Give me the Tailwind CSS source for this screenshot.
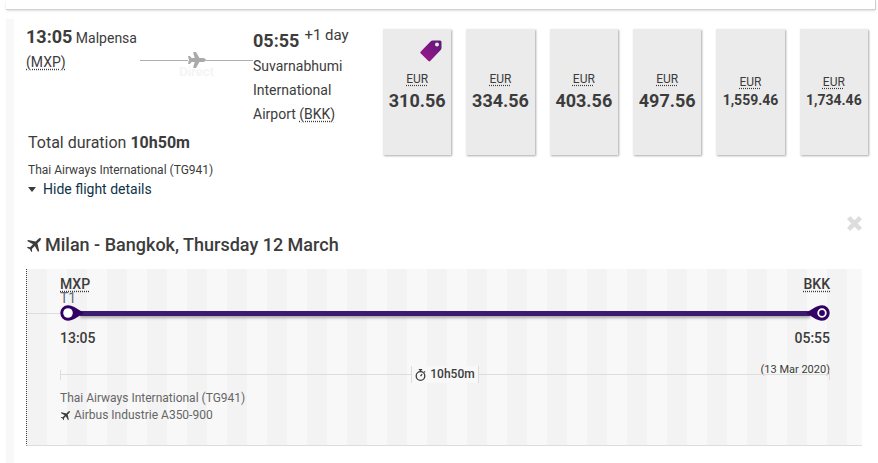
<!DOCTYPE html>
<html lang="en">
<head>
    <meta charset="UTF-8">
    <meta name="viewport" content="width=device-width, initial-scale=1.0">
    <title>Milan - Bangkok flights</title>
    <script src="https://cdn.jsdelivr.net/npm/@tailwindcss/browser@4"></script>
</head>
<body class="bg-white font-['Roboto',sans-serif] text-sm text-[#3c3c3c]">
    <!-- Shared icons -->
    <svg class="hidden">
        <symbol id="plane" viewBox="0 0 576 512">
            <path d="M480 192H365.71L260.61 8.06A16.014 16.014 0 0 0 246.71 0h-65.5c-10.63 0-18.3 10.17-15.38 20.39L214.86 192H112l-43.2-57.6c-3.02-4.03-7.77-6.4-12.8-6.4H16.01C5.6 128-2.04 137.78.49 147.88L32 256 .49 364.12C-2.04 374.22 5.6 384 16.01 384H56c5.04 0 9.78-2.37 12.8-6.4L112 320h102.86l-49.03 171.6c-2.92 10.22 4.75 20.4 15.38 20.4h65.5c5.74 0 11.04-3.08 13.89-8.06L365.71 320H480c35.35 0 96-28.65 96-64s-60.65-64-96-64z"/>
        </symbol>
        <symbol id="plane-up" viewBox="0 0 16 16">
            <path d="M15.7.3c.5.6.1 1.800-.9 2.800L12.200 5.700l1.800 8-1.100 1.100-3.500-6.300-3.200 3.200.4 2.300-.9.900-1.600-3L1.100 10.300l.9-.9 2.300.4 3.200-3.200L1.200 3.100 2.300 2l8 1.800L12.900 1.200C13.900.2 15.100-.2 15.700.3z"/>
        </symbol>
    </svg>

    <div class="mr-[2px] ml-[6px] h-[10px] border-r border-b border-[#d0d0d0] shadow-sm"></div>

    <main class="mt-[9px] ml-[6px] border-l-8 border-[#f8f8f8] pr-[10px] pb-[18px] pl-3">
        <!-- Flight summary and fares -->
        <section class="flex pt-[10px]">
            <div class="w-[357px] shrink-0">
                <div class="flex leading-6">
                    <div class="-mt-1 w-[114px] shrink-0">
                        <strong class="text-lg leading-6">13:05</strong>
                        Malpensa <abbr class="underline decoration-dotted underline-offset-2" title="Milan Malpensa">(MXP)</abbr>
                    </div>
                    <div class="flex w-[113px] shrink-0 flex-col items-center pt-[23px]">
                        <div class="flex w-full items-center">
                            <span class="h-px flex-1 bg-[#b0b0b0]"></span>
                            <svg class="h-4 w-[18px] fill-[#aaa]"><use href="#plane"/></svg>
                            <span class="h-px flex-1 bg-[#b0b0b0]"></span>
                        </div>
                        <span class="-mt-1 text-[13px] leading-4 font-bold text-[#f5f5f5]">Direct</span>
                    </div>
                    <div class="w-[110px]">
                        <div class="flex h-[25px] gap-[5px]">
                            <strong class="text-lg leading-6">05:55</strong>
                            <span class="text-[15px] leading-3">+1 day</span>
                        </div>
                        Suvarnabhumi International Airport <abbr class="underline decoration-dotted underline-offset-2" title="Bangkok Suvarnabhumi">(BKK)</abbr>
                    </div>
                </div>
                <div class="mt-[5px] pl-[2px]">
                    <p class="text-base leading-6">Total duration <strong>10h50m</strong></p>
                    <p class="mt-1 text-xs leading-[22px]">Thai Airways International (TG941)</p>
                    <button type="button" class="flex items-center gap-[7px] leading-4 text-[#0d3349]">
                        <svg class="h-[5px] w-2 fill-[#3c3c3c]" viewBox="0 0 8 5"><path d="M0 0h8L4 5z"/></svg>
                        Hide flight details
                    </button>
                </div>
            </div>
            <div class="grid h-[126px] flex-1 grid-cols-6 gap-[15px]">
                <button type="button" class="relative flex flex-col items-center bg-[#ebebeb] pt-10 shadow-[1px_1px_2px_#aaa]">
                    <svg class="absolute top-[11px] right-[9px] h-[22px] w-[22px]" viewBox="0 0 22 22">
                        <defs><linearGradient id="tag" x1="1" y1="0" x2="0" y2="1"><stop stop-color="#5b1a78"/><stop offset="1" stop-color="#a3158c"/></linearGradient></defs>
                        <path fill="url(#tag)" fill-rule="evenodd" d="M12.500.500H20q1.500 0 1.500 1.500v6q0 1-.8 1.900L10.200 21q-.9.900-1.800 0L.8 13.500q-1-1 0-2L10.800 1.300q.8-.8 1.700-.8zM17 2.500a2 2 0 1 0 0 4 2 2 0 0 0 0-4z"/>
                    </svg>
                    <abbr class="text-xs leading-5 underline decoration-dotted underline-offset-2" title="Euro">EUR</abbr>
                    <strong class="text-lg leading-6">310.56</strong>
                </button>
                <button type="button" class="flex flex-col items-center bg-[#ebebeb] pt-10 shadow-[1px_1px_2px_#aaa]">
                    <abbr class="text-xs leading-5 underline decoration-dotted underline-offset-2" title="Euro">EUR</abbr>
                    <strong class="text-lg leading-6">334.56</strong>
                </button>
                <button type="button" class="flex flex-col items-center bg-[#ebebeb] pt-10 shadow-[1px_1px_2px_#aaa]">
                    <abbr class="text-xs leading-5 underline decoration-dotted underline-offset-2" title="Euro">EUR</abbr>
                    <strong class="text-lg leading-6">403.56</strong>
                </button>
                <button type="button" class="flex flex-col items-center bg-[#ebebeb] pt-10 shadow-[1px_1px_2px_#aaa]">
                    <abbr class="text-xs leading-5 underline decoration-dotted underline-offset-2" title="Euro">EUR</abbr>
                    <strong class="text-lg leading-6">497.56</strong>
                </button>
                <button type="button" class="flex flex-col items-center bg-[#ebebeb] pt-[43px] shadow-[1px_1px_2px_#aaa]">
                    <abbr class="text-xs leading-5 underline decoration-dotted underline-offset-2" title="Euro">EUR</abbr>
                    <strong class="text-sm leading-4">1,559.46</strong>
                </button>
                <button type="button" class="flex flex-col items-center bg-[#ebebeb] pt-[43px] shadow-[1px_1px_2px_#aaa]">
                    <abbr class="text-xs leading-5 underline decoration-dotted underline-offset-2" title="Euro">EUR</abbr>
                    <strong class="text-sm leading-4">1,734.46</strong>
                </button>
            </div>
        </section>

        <!-- Flight details -->
        <section class="mt-[19px] pr-[6px]">
            <button type="button" class="ml-auto block" aria-label="Close">
                <svg class="h-[15px] w-[15px] stroke-[#ddd]" viewBox="0 0 15 15" stroke-width="4.500"><path d="M1.600 1.600l11.800 11.800M13.400 1.600L1.600 13.400"/></svg>
            </button>
            <h2 class="mt-[2px] flex items-center gap-1 text-lg leading-6 font-medium">
                <svg class="h-[15px] w-[15px] fill-[#3c3c3c]"><use href="#plane-up"/></svg>
                Milan - Bangkok, Thursday 12 March
            </h2>

            <div class="mt-3 border-b border-l border-b-[#ddd] border-l-[#3c3c3c] [border-left-style:dotted] bg-[repeating-linear-gradient(90deg,#f3f3f3_0_20px,#f8f8f8_20px_40px)] pt-2 pb-[21px]">
                <div class="flex justify-between pr-8 pl-[33px] leading-[14px] font-medium">
                    <div>
                        <abbr class="underline decoration-dotted underline-offset-2" title="Milan Malpensa">MXP</abbr>
                        <p class="font-normal text-[#5f6a78]">T1</p>
                    </div>
                    <abbr class="underline decoration-dotted underline-offset-2" title="Bangkok Suvarnabhumi">BKK</abbr>
                </div>
                <div class="flex items-center pr-8">
                    <span class="h-px w-[33px] bg-[#ddd]"></span>
                    <svg class="z-10 h-4 w-6" viewBox="0 0 24 16">
                        <path fill="#306" d="M8 .300C13 .300 18 4.500 24 8 18 11.500 13 15.700 8 15.700A7.700 7.700 0 0 1 8 .300z"/>
                        <circle cx="8" cy="8" r="4.800" fill="#fff"/>
                    </svg>
                    <span class="-mx-1 h-[5px] flex-1 bg-[#3c1a70] shadow-[0_2px_3px_#aaa]"></span>
                    <svg class="z-10 h-4 w-6" viewBox="0 0 24 16">
                        <path fill="#306" d="M16 .300C11 .300 6 4.500 0 8 6 11.500 11 15.700 16 15.700A7.700 7.700 0 0 0 16 .300z"/>
                        <circle cx="16" cy="8" r="3.800" fill="none" stroke="#fff" stroke-width="1.800"/>
                    </svg>
                </div>
                <div class="mt-[7px] flex justify-between pr-8 pl-[33px] leading-5 font-medium">
                    <span>13:05</span>
                    <span>05:55</span>
                </div>
                <div class="mt-3 mb-px grid pr-8 pl-[33px]">
                    <span class="col-start-1 row-start-1 justify-self-end text-[11px] leading-5">(13 Mar 2020)</span>
                    <div class="col-start-1 row-start-1 flex h-[29px] items-center">
                        <span class="h-[10px] w-px bg-[#ddd]"></span>
                        <span class="h-px flex-1 bg-[#ddd]"></span>
                        <span class="flex items-center gap-1 border-x border-[#ddd] bg-[#f8f8f8] px-[3px] text-xs leading-[17px] font-medium">
                            <svg class="h-3 w-[11px] fill-none stroke-[#3c3c3c]" viewBox="0 0 11 12" stroke-width="1.300"><circle cx="5.500" cy="7" r="4.300"/><path d="M3.800.700h3.400M5.500.700v2M5.500 7.200l1.700-2M9 2.400l1 1"/></svg>
                            10h50m
                        </span>
                        <span class="h-px flex-1 bg-[#ddd]"></span>
                        <span class="h-[10px] w-px bg-[#ddd]"></span>
                    </div>
                </div>
                <div class="pl-[33px] text-xs leading-[17px] text-[#666]">
                    <p>Thai Airways International (TG941)</p>
                    <p class="flex items-center gap-1">
                        <svg class="h-[10px] w-[10px] fill-[#3c3c3c]"><use href="#plane-up"/></svg>
                        Airbus Industrie A350-900
                    </p>
                </div>
            </div>
        </section>
    </main>
</body>
</html>
